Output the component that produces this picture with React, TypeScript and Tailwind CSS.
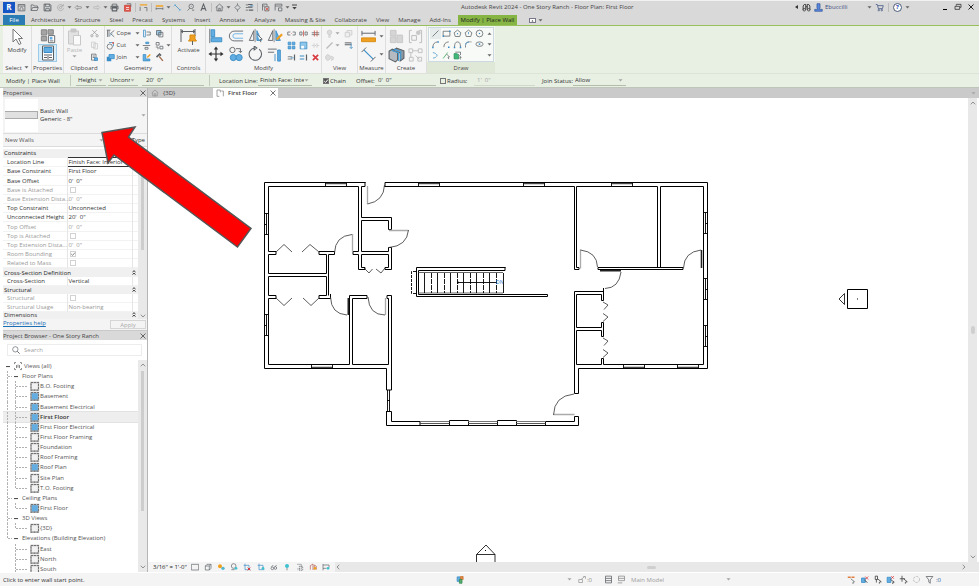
import type { ReactNode } from "react";

const INK = "#5c6166";
const BLUE = "#62aee2";
const DEEP = "#3a8cc6";
const ORANGE = "#f0a020";
const PALE = "#c8c8c8";

type GlyphProps = { size?: string; box?: string; children: ReactNode };

function Glyph({ size = "h-3 w-3", box = "0 0 12 12", children }: GlyphProps) {
  return (
    <svg className={`${size} shrink-0`} viewBox={box} fill="none" stroke={INK} strokeWidth="1" aria-hidden="true">
      {children}
    </svg>
  );
}

function Caret({ pale = false }: { pale?: boolean }) {
  return (
    <svg className="h-[3px] w-[5px] shrink-0" viewBox="0 0 5 3" aria-hidden="true">
      <path d="M0.5 0.3h4L2.5 2.6z" fill={pale ? "#a5a5a5" : "#666"} />
    </svg>
  );
}

function Chevron({ turn = "" }: { turn?: string }) {
  return (
    <svg className={`h-[4px] w-[6px] shrink-0 ${turn}`} viewBox="0 0 6 4" fill="none" stroke="#909090" aria-hidden="true">
      <path d="M0.8 0.7 3 3 5.2 0.7" />
    </svg>
  );
}

function Cross({ color = "#666" }: { color?: string }) {
  return (
    <svg className="h-[6px] w-[6px]" viewBox="0 0 6 6" stroke={color} fill="none" aria-hidden="true">
      <path d="M0.5 0.5 5.5 5.5M5.5 0.5 0.5 5.5" />
    </svg>
  );
}

function IconButton({ label, className = "", children }: { label: string; className?: string; children: ReactNode }) {
  return (
    <button type="button" aria-label={label} className={`flex shrink-0 items-center justify-center ${className}`}>
      {children}
    </button>
  );
}

function Check({ id, label, checked = false, pale = false }: { id: string; label?: string; checked?: boolean; pale?: boolean }) {
  return (
    <span className="relative inline-flex h-[6px] w-[6px] shrink-0">
      <input
        id={id}
        type="checkbox"
        aria-label={label}
        defaultChecked={checked}
        className={`h-[6px] w-[6px] appearance-none border ${pale ? "border-[#d2d2d2] bg-white" : "border-[#777] checked:bg-[#555]"}`}
      />
      {checked && (
        <svg className="pointer-events-none absolute inset-0 h-[6px] w-[6px]" viewBox="0 0 6 6" fill="none" stroke={pale ? "#888" : "#fff"} aria-hidden="true">
          <path d="M1.2 3 2.6 4.4 4.9 1.6" />
        </svg>
      )}
    </span>
  );
}

/* ---------- Quick access toolbar ---------- */

type Entry = { label: string; art: ReactNode };

const fileTools: Entry[] = [
  { label: "Home", art: <><path d="M1.5 2h9v8.5h-9zM1.5 4h9" /><path d="M4 10V7l2-1.5L8 7v3" /></> },
  { label: "Open", art: <path d="M1.5 10V2.500h3l1 1.500H10v2M1.500 10l2-4H11L9.500 10z" /> },
  { label: "Save", art: <><path d="M1.500 1.500H9L10.500 3v7.500h-9z" strokeWidth="1.300" /><path d="M3.500 1.500V5h5V1.500M3.500 10.500V7.500h5v3" /></> },
  { label: "Synchronize", art: <><path d="M9.500 4A4 4 0 1 0 10 7M9.700 1.500V4.200H7" stroke="#a5a5a5" /><circle cx="6" cy="6" r="1.500" stroke="#a5a5a5" /></> },
];
const undoTool: Entry = { label: "Undo", art: <path d="M4.500 3 1.500 6l3 3V7.200h3q2.500 0 3-1.200q-.5-1.200-3-1.200h-3z" stroke="#888" /> };
const redoTool: Entry = { label: "Redo", art: <path d="M7.500 3 10.500 6l-3 3V7.200h-3q-2.500 0-3-1.200q.5-1.200 3-1.200h3z" stroke="#b5b5b5" /> };
const outputTools: Entry[] = [
  { label: "Print", art: <><path d="M3 4V1.500h6V4M3 8H1.200V4.200h9.600V8H9" /><path d="M3 6.500h6v4H3zM1.500 5h9" strokeWidth="1.400" /></> },
  { label: "Export PDF", art: <><path d="M2 3h8v8H2z" fill="#e0574d" stroke="#c9453b" /><path d="M4 6h4M4 8.500h4" stroke="#fff" /><path d="M5 1h5.500v4" /></> },
];
const measureTool: Entry = { label: "Measure", art: <><path d="M1 2.500h10" stroke={ORANGE} strokeWidth="1.600" /><path d="M1.500 5v5.500M7 6h3.500v5" /></> };
const dimensionTool: Entry = { label: "Aligned dimension", art: <><path d="M1 4h10" stroke={ORANGE} strokeWidth="2" /><path d="M1.500 7.500h9M1.500 6v3M10.500 6v3" /></> };
const annotateTools: Entry[] = [
  { label: "Dimension", art: <><path d="M2.500 2.500 9.500 9.500" stroke={DEEP} /><path d="M1 4.500 3.500 1.500M8 11l3-3" stroke={BLUE} /></> },
  { label: "Tag", art: <><circle cx="7" cy="4.500" r="3" /><path d="M5 7 2 10M6.500 4.500h1M8 9.500h3" /></> },
  { label: "Text", art: <path d="M2.500 10.500 6 1.500l3.500 9M3.800 7.500h4.400" strokeWidth="1.400" /> },
];

function QuickTool({ item }: { item: Entry }) {
  return (
    <IconButton label={item.label} className="w-[13px]">
      <Glyph size="h-[9px] w-[9px]">{item.art}</Glyph>
    </IconButton>
  );
}

function Divider() {
  return <span className="mx-px h-[9px] w-px bg-[#bdbdbd]" />;
}

function QuickRow() {
  return (
    <>
      {fileTools.map((t) => <QuickTool key={t.label} item={t} />)}
      <IconButton label="Synchronize options" className="w-[5px]"><Caret /></IconButton>
      <QuickTool item={undoTool} />
      <IconButton label="Undo list" className="w-[5px]"><Caret /></IconButton>
      <QuickTool item={redoTool} />
      <IconButton label="Redo list" className="w-[5px]"><Caret /></IconButton>
      {outputTools.map((t) => <QuickTool key={t.label} item={t} />)}
      <Divider />
      <QuickTool item={measureTool} />
      <Divider />
      <QuickTool item={dimensionTool} />
      <IconButton label="Dimension options" className="w-[5px]"><Caret /></IconButton>
      {annotateTools.map((t) => <QuickTool key={t.label} item={t} />)}
      <Divider />
      <IconButton label="3D view" className="w-[13px]">
        <Glyph size="h-[9px] w-[9px]"><path d="M1 6 6 1.500 11 6M2.500 5v5.500h7V5M5 10.500V7h2v3.500" /></Glyph>
      </IconButton>
      <IconButton label="3D view options" className="w-[5px]"><Caret /></IconButton>
      <IconButton label="Section" className="w-[12px]">
        <Glyph size="h-[9px] w-[9px]"><path d="M6 2.500 9.500 6 6 9.500 2.500 6zM6 .5v2M6 9.500v2" /></Glyph>
      </IconButton>
      <IconButton label="Thin lines" className="w-[13px]">
        <Glyph size="h-[9px] w-[9px]"><path d="M1 2.500h3M1 6h3M1 9.500h3" /><path d="M4 2h6M4 5.500h6M5 9.500h6" strokeWidth="1.600" /><path d="M7 3.700h4" stroke={DEEP} /></Glyph>
      </IconButton>
      <Divider />
      <IconButton label="Close inactive views" className="w-[13px]">
        <Glyph size="h-[9px] w-[9px]"><path d="M2 10V1.500h6v3M2 4h3" /><path d="M5 5h5.500v5.500H5z" /><path d="m6 6 4 4M10 6l-4 4" stroke="#d84a40" /></Glyph>
      </IconButton>
      <IconButton label="Switch windows" className="w-[12px]">
        <Glyph size="h-[9px] w-[9px]"><path d="M1.500 10V1.500h9v3M1.500 4h9" /><path d="M6 6.500h4.500v4H6z" fill="#ddd" /></Glyph>
      </IconButton>
      <IconButton label="Window list" className="w-[6px]"><Caret /></IconButton>
      <IconButton label="Customize" className="w-[9px]">
        <svg className="h-[6px] w-[5px]" viewBox="0 0 5 6" aria-hidden="true"><path d="M0 .5h5v1H0zM0.300 3h4.400L2.500 5.500z" fill="#444" /></svg>
      </IconButton>
    </>
  );
}

function TitleBar() {
  return (
    <header className="relative flex h-[13px] shrink-0 items-center border-t border-[#f2f2f2] bg-[#d9d9d9] pl-[3px]">
      <IconButton label="Revit menu" className="h-[11px] w-[12px] bg-[#1656c4] text-[8px] leading-none font-bold text-white">R</IconButton>
      <QuickRow />
      <h1 className="absolute left-[461px] text-[6px] whitespace-nowrap text-[#444]">Autodesk Revit 2024 - One Story Ranch - Floor Plan: First Floor</h1>
      <div className="ml-auto flex items-center">
        <svg className="mr-[4px] h-[4px] w-[3px]" viewBox="0 0 3 4" aria-hidden="true"><path d="M3 0v4L0 2z" fill="#333" /></svg>
        <IconButton label="Search" className="mr-[3px]">
          <Glyph size="h-[9px] w-[9px]"><path d="M1.500 9V4l1.500-2h2v7M10.500 9V4L9 2H7v7M5 5h2" stroke="#333" strokeWidth="1.200" /><circle cx="3" cy="9" r="1.700" stroke="#333" /><circle cx="9" cy="9" r="1.700" stroke="#333" /></Glyph>
        </IconButton>
        <IconButton label="Account" className="mr-[2px]">
          <Glyph size="h-[9px] w-[9px]"><path d="M4 1h4v5.500L7 8.500h4v2.500H1V8.500h4L4 6.500z" fill="#5b8ae0" stroke="#34579c" /></Glyph>
        </IconButton>
        <button type="button" className="w-[42px] text-left text-[6px] text-[#3a4e80]">Ebuccilli</button>
        <Caret />
        <IconButton label="App store" className="ml-[3px]">
          <Glyph size="h-[9px] w-[9px]"><path d="M1 2h2l1.500 5.500H10L11 3.500H4" stroke="#3d5180" /><circle cx="5" cy="9.500" r="1" stroke="#3d5180" /><circle cx="9" cy="9.500" r="1" stroke="#3d5180" /></Glyph>
        </IconButton>
        <span className="mx-[4px] h-[9px] w-px bg-[#bbb]" />
        <IconButton label="Help" className="mr-[3px] h-[9px] w-[9px] rounded-full border border-[#4a5a7a] bg-white text-[6px] leading-none font-bold text-[#1c48a8]">?</IconButton>
        <Caret />
        <IconButton label="Minimize" className="ml-[32px] h-[8px] w-[5px]"><span className="mt-[4px] h-px w-[4px] bg-black" /></IconButton>
        <IconButton label="Restore" className="ml-[7px]">
          <Glyph size="h-[8px] w-[8px]"><path d="M3.500 4V2h7v4.500H9M1.500 5h7v4.500h-7z" stroke="#333" strokeWidth="1.200" /></Glyph>
        </IconButton>
        <IconButton label="Close" className="mr-[5px] ml-[6px]"><Cross color="#222" /></IconButton>
      </div>
    </header>
  );
}

const tabs = ["Architecture", "Structure", "Steel", "Precast", "Systems", "Insert", "Annotate", "Analyze", "Massing & Site", "Collaborate", "View", "Manage", "Add-Ins"];

function TabBar() {
  return (
    <nav className="flex h-[13px] shrink-0 items-stretch border-b border-[#97c05c] bg-[#d9d9d9] pt-[2px] pl-[3px] text-[6px] leading-[10px] text-[#444]">
      <button type="button" className="w-[22px] bg-[#2b7bb4] text-white">File</button>
      <div className="flex w-[431px] justify-between pr-[5px] pl-[6px]">
        {tabs.map((t) => (
          <button key={t} type="button" className="whitespace-nowrap">{t}</button>
        ))}
      </div>
      <button type="button" className="ml-[2px] w-[59px] bg-[#86b545] whitespace-nowrap text-[#222]">Modify | Place Wall</button>
      <IconButton label="Ribbon display" className="ml-[12px] gap-[2px]">
        <svg className="h-[5px] w-[7px]" viewBox="0 0 7 5" aria-hidden="true"><rect x=".5" y=".5" width="6" height="4" fill="#fff" stroke="#778" /><path d="M2.500 3.500h2L3.500 2z" fill="#333" /></svg>
        <Caret />
      </IconButton>
    </nav>
  );
}

/* ---------- Ribbon ---------- */

function Panel({ title, width, active = false, menu = false, children }: { title: string; width: string; active?: boolean; menu?: boolean; children: ReactNode }) {
  return (
    <section className={`flex shrink-0 flex-col ${width} ${active ? "bg-[#f4f7f0]" : "border-r border-[#dedede] bg-[#f5f5f5]"}`}>
      <div className="flex min-h-0 flex-1 justify-center pt-px">{children}</div>
      <h2 className={`flex h-[11px] items-center justify-center gap-[2px] text-[6px] leading-none text-[#444] ${active ? "bg-[#dfe8d7]" : ""}`}>
        {title}
        {menu && <Caret />}
      </h2>
    </section>
  );
}

function Tool({ label, art, cell = "h-[12px] w-[13px]", glyph = "h-[9px] w-[9px]", box }: { label: string; art: ReactNode; cell?: string; glyph?: string; box?: string }) {
  return (
    <IconButton label={label} className={cell}>
      <Glyph size={glyph} box={box}>{art}</Glyph>
    </IconButton>
  );
}

function Column({ children, className = "" }: { children: ReactNode; className?: string }) {
  return <div className={`flex flex-col ${className}`}>{children}</div>;
}

const geometryRows: { text: string; left: ReactNode; mid: ReactNode; end: ReactNode; caret?: boolean }[] = [
  {
    text: "Cope",
    left: <><path d="M2 1.500v9M4 1.500v9M1 1.500h5M11 2 6 6l5 4.500" /><path d="m5 9 3-3" stroke={DEEP} /></>,
    mid: <><path d="M2 1.500h2.500v9H2z" stroke={DEEP} /><path d="M6 4h5v4H6" /></>,
    end: <><path d="M2 2h6v6H2z" fill="#9ccae8" /><path d="M5 4.500h5.500v6H5z" /></>,
  },
  {
    text: "Cut",
    left: <><path d="M4 2h6v5" stroke={DEEP} /><circle cx="5" cy="7.500" r="3.500" /><circle cx="9.500" cy="2.500" r="1.200" fill="#e05040" stroke="none" /></>,
    mid: <><path d="M5 1.500h4v2H5z" fill={BLUE} stroke={DEEP} /><path d="M1 6h10M4 8.500h4V11H4z" /></>,
    end: <><path d="M1.500 2h4v3.500h-4zM6.500 7h4v3.500h-4z" /><path d="M1 8h3v3" /></>,
    caret: true,
  },
  {
    text: "Join",
    left: <><path d="M1 5h6v6H1z" fill={DEEP} stroke="none" /><path d="M4 2h7v5.500H4z" fill={BLUE} stroke={DEEP} /></>,
    mid: <><path d="M1.500 2v8.500h9V8H5V2z" fill={BLUE} stroke={DEEP} /><path d="m7 6 4-4" stroke={ORANGE} strokeWidth="1.800" /></>,
    end: <><path d="M2 5.500 6 1.500l2 2" strokeWidth="2.200" /><path d="m5.500 4.500 5 6" stroke="#a06a4a" strokeWidth="1.800" /></>,
  },
];

const modifySmall: Entry[] = [
  { label: "Split element", art: <><path d="M1 4h3.500M1 8h3.500M1 4v4M11 4H7.500M11 8H7.500M11 4v4" /><path d="M5.500 6h1" stroke="#e06a5a" /></> },
  { label: "Split with gap", art: <><path d="M1 4h3v4H1zM8 4h3v4H8z" /><path d="M6 2v8" stroke="#d05040" /></> },
  { label: "Unpin", art: <><path d="M1 5h10M1 7.500h10" /><path d="M4.500 2v8M8 2v8" stroke="#d05040" /></> },
  { label: "Array", art: <path d="M1.500 1.500h3.500V5H1.500zM7 1.500h3.500V5H7zM1.500 7h3.500v3.500H1.500zM7 7h3.500v3.500H7z" fill={BLUE} stroke={DEEP} /> },
  { label: "Scale", art: <><path d="M1.500 1.500h9v9h-9z" fill="#8cc4ea" stroke={DEEP} /><path d="M3 6.500h3.500v3.500H3z" fill="#fff" stroke="none" /></> },
  { label: "Pin", art: <><path d="M1 6h3M8 6h3M4 3v6M8 3v6" stroke={PALE} /><path d="m5 5 2 2M7 5 5 7" stroke={PALE} /></> },
  { label: "Trim single", art: <><path d="M1 8h6M1 5h6" /><path d="M10 2v8" strokeWidth="1.600" /><path d="M5 6.500h4" stroke={DEEP} /></> },
  { label: "Trim multiple", art: <><path d="M1 4h6M1 8h6" stroke={DEEP} strokeWidth="1.600" /><path d="M10 2v8" strokeWidth="1.600" /></> },
  { label: "Delete", art: <path d="m2.500 2.500 7 7M9.500 2.500l-7 7" stroke="#d83a40" strokeWidth="2.200" /> },
];

const modifyLarge: Entry[] = [
  { label: "Align", art: <><path d="M2 1v16" /><path d="M3.500 2h4v8h-4zM3.500 11h12v4.500h-12z" fill={BLUE} stroke={DEEP} /></> },
  { label: "Offset", art: <><path d="M17 3.500H7a5.500 5.500 0 0 0 0 11h10" /><path d="M17 6.500H8a2.500 2.500 0 0 0 0 5h9" stroke={BLUE} /></> },
  { label: "Mirror pick", art: <><path d="M8 1v15" stroke="#888" /><path d="M6.500 3v11h-5z" /><path d="M10 3v11h5z" fill={BLUE} stroke={DEEP} /><path d="m10 7 6 5.500-2.500.5 1 3" fill="#fff" /></> },
  { label: "Mirror draw", art: <><path d="M8 1v15" stroke="#888" /><path d="M6.500 3v11h-5z" /><path d="M10 3v11h5z" fill={BLUE} stroke={DEEP} /><path d="m11 13 6-6" stroke={ORANGE} strokeWidth="2.500" /></> },
  { label: "Move", art: <><path d="M9 3v12M3 9h12" strokeWidth="1.300" stroke="#333" /><path d="M9 .5 11.500 4h-5zM9 17.500 11.500 14h-5zM.5 9 4 6.500v5zM17.500 9 14 6.500v5z" fill="#333" stroke="none" /></> },
  { label: "Copy", art: <><circle cx="5" cy="4.500" r="3" /><path d="M9 3h5v4M12 5.500l2 2 2-2" /><circle cx="6" cy="13" r="3.500" fill={BLUE} stroke={DEEP} /><circle cx="12.500" cy="13" r="3.500" fill={BLUE} stroke={DEEP} /></> },
  { label: "Rotate", art: <path d="M12.500 3.500A7 7 0 1 1 7 2.200M7 0v4.500L10 2.200z" strokeWidth="1.200" /> },
  { label: "Trim to corner", art: <><path d="M1 3.500h10M1 7h7" /><path d="M9 17V9M12 17V4.500h3V17z" stroke={DEEP} fill={BLUE} /></> },
];

const drawTools: Entry[] = [
  { label: "Line", art: <path d="m2 10 8-8" /> },
  { label: "Rectangle", art: <><path d="M1.500 3h9v6.500h-9z" /><path d="M.8 8.500h2v2h-2zM9.500 2h2v2h-2z" fill={DEEP} stroke="none" /></> },
  { label: "Inscribed polygon", art: <><path d="m6 1.500 4.500 3.500L9 10H3L1.500 5z" /><path d="M5.200 5.500h1.600v1.600H5.200z" fill={DEEP} stroke="none" /></> },
  { label: "Circumscribed polygon", art: <><path d="m6 1.500 4.500 3.500L9 10H3L1.500 5z" /><path d="M6 4v3" stroke={DEEP} /></> },
  { label: "Circle", art: <><circle cx="6" cy="6" r="4.500" /><path d="M5.200 5.200h1.600v1.600H5.200z" fill={DEEP} stroke="none" /></> },
  { label: "Start-end-radius arc", art: <><path d="M2.500 9.500Q2.500 3 9 2.500" /><path d="M1.500 9h2v2h-2zM8.500 1.500h2v2h-2z" fill={DEEP} stroke="none" /></> },
  { label: "Center-ends arc", art: <><path d="M2.500 9.500Q2.500 3 9 2.500" /><path d="M8 8.500h2v2H8z" fill={DEEP} stroke="none" /></> },
  { label: "Tangent arc", art: <><path d="M2 9.500Q2 2.500 6 2.500T10 9.500" /><path d="M1 9h2v2H1zM9 9h2v2H9z" fill={DEEP} stroke="none" /></> },
  { label: "Fillet arc", art: <><path d="M2 10V7Q2 2.500 7 2.500h3" strokeDasharray="3 1" /><path d="M2 7Q2 2.500 7 2.500" stroke={DEEP} /></> },
  { label: "Ellipse", art: <><ellipse cx="6" cy="5.500" rx="4.800" ry="3" /><path d="M5 4.500h2v2H5z" fill={DEEP} stroke="none" /></> },
  { label: "Partial ellipse", art: <path d="M2.500 2Q9 4 8 6.500T2.500 9.500" stroke={DEEP} strokeDasharray="4 1" /> },
  { label: "Pick lines", art: <><path d="m1.500 10 6-8" stroke="#30a050" /><path d="m6 4 4 4-2 .3 1 2.500" fill="#fff" /></> },
  { label: "Pick faces", art: <><path d="M1.500 3.500h6v7h-6z" fill="#3fb878" stroke="#2a8f58" /><path d="M3 1.500h7v4M7 5l4 3.500-2 .3 1 2.500" fill="#fff" /></> },
];

function Ribbon() {
  return (
    <div className="flex h-[48px] shrink-0 border-b border-[#dde3d8] bg-[#e8efe3] pl-[3px] text-[6px] leading-none text-[#444]">
      <Panel title="Select" width="w-[29px]" menu>
        <button type="button" className="flex flex-col items-center">
          <Glyph size="h-[20px] w-[14px]" box="0 0 14 20"><path d="M3 2v13l3-3 3 5.500 2-1-2.500-5H12.500z" fill="#fff" stroke="#777" /></Glyph>
          <span>Modify</span>
        </button>
      </Panel>
      <Panel title="Properties" width="w-[32px]">
        <Column className="items-center">
          <Tool label="Type properties" cell="h-[17px] w-[19px]" glyph="h-[16px] w-[16px]" box="0 0 18 18" art={<><path d="M1.500 2h6v6h-6zM9 2h6v5H9zM1.500 9.500h6v5h-6z" fill="#a5a5a5" stroke="#808080" /><path d="M9.500 8.500h7v8h-7z" fill="#fff" /><path d="M11 10h3v3h-3z" fill={BLUE} stroke="none" /><path d="M11 14.500h4" /></>} />
          <IconButton label="Properties palette" className="h-[18px] w-[19px] border border-[#9ccbe8] bg-[#d9edf8]">
            <Glyph size="h-[16px] w-[16px]" box="0 0 16 16"><path d="M2.500 1h11v14h-11z" fill="#fff" /><path d="M4 2.500h8v5H4z" fill={BLUE} stroke={DEEP} /><path d="M4 10h3M9 10h3M4 12.500h3M9 12.500h3M8 9v5" /></Glyph>
          </IconButton>
        </Column>
      </Panel>
      <Panel title="Clipboard" width="w-[41px]">
        <button type="button" className="mr-[6px] flex flex-col items-center text-[#b5b5b5]">
          <Glyph size="h-[20px] w-[15px]" box="0 0 15 20"><path d="M1.500 4h10v13h-10z" fill="#e2e2e2" stroke={PALE} /><path d="M4 2h5v3H4z" fill={PALE} stroke={PALE} /><path d="M6.500 8.500h7V18h-7z" fill="#fafafa" stroke={PALE} /></Glyph>
          <span className="mb-[2px]">Paste</span>
          <Caret pale />
        </button>
        <Column>
          <Tool label="Cut to clipboard" art={<><path d="m3 1.500 6 6M9 1.500l-6 6" stroke="#999" /><circle cx="2.500" cy="9" r="1.500" stroke="#999" /><circle cx="9.500" cy="9" r="1.500" stroke="#999" /></>} />
          <Tool label="Copy to clipboard" art={<path d="M2 1.500h5v7H2zM5 3.500h5v7H5z" stroke={PALE} />} />
          <Tool label="Match type" art={<><path d="M2 1.500h6v8H2zM3.500 4h3M3.500 6h3" /><path d="M6 6.500h4V10H6z" fill={BLUE} stroke={DEEP} /></>} />
        </Column>
      </Panel>
      <Panel title="Geometry" width="w-[67px]">
        <Column>
          {geometryRows.map((r) => (
            <div key={r.text} className="flex h-[12px] items-center">
              <button type="button" className="flex items-center gap-[2px]">
                <Glyph size="h-[9px] w-[9px]">{r.left}</Glyph>
                <span className="w-[16px] text-left">{r.text}</span>
                <Caret />
              </button>
              <Tool label={`${r.text} tool`} art={r.mid} />
              <Tool label={`${r.text} option`} art={r.end} />
              <span className="w-[5px]">{r.caret && <Caret />}</span>
            </div>
          ))}
        </Column>
      </Panel>
      <Panel title="Controls" width="w-[34px]">
        <button type="button" className="flex flex-col items-center">
          <Glyph size="h-[20px] w-[18px]" box="0 0 18 20"><path d="M2 2v13M16 2v7M2 4.500h14M4 3 2 4.500 4 6M14 3l2 1.500L14 6" /><path d="M11 8h5v4l1.500 2h-8l1.500-2z" fill={ORANGE} stroke="#d98c10" /><path d="M13.500 14v4" /></Glyph>
          <span>Activate</span>
        </button>
      </Panel>
      <Panel title="Modify" width="w-[116px]">
        <div className="grid grid-cols-4">
          {modifyLarge.map((m) => (
            <Tool key={m.label} label={m.label} art={m.art} cell="h-[18px] w-[20px]" glyph="h-[16px] w-[16px]" box="0 0 18 18" />
          ))}
        </div>
        <div className="grid grid-cols-3 self-start">
          {modifySmall.map((m) => (
            <Tool key={m.label} label={m.label} art={m.art} cell="h-[12px] w-[12px]" />
          ))}
        </div>
      </Panel>
      <Panel title="View" width="w-[36px]">
        <Column>
          <div className="flex items-center"><Tool label="Hide" cell="h-[12px] w-[10px]" art={<><circle cx="6" cy="4.500" r="3" stroke={PALE} fill="#ddd" /><path d="M5 8.500h2V11H5z" stroke={PALE} /></>} /><Caret pale /></div>
          <div className="flex items-center"><Tool label="Override graphics" cell="h-[12px] w-[10px]" art={<path d="m2 10 3-3 5-5" stroke="#bbb" strokeWidth="1.800" />} /><Caret pale /></div>
          <Tool label="Displace" cell="h-[12px] w-[10px]" art={<path d="M3.500 2 7 4v4l-3.500 2L1 8V4zM8 4l3 1.500v3L8 10" fill="#ddd" stroke={PALE} />} />
        </Column>
        <Column className="ml-[2px]">
          <Tool label="Selection box" art={<path d="M1.500 4.500h6v6h-6zM4 4.500V2h6.500v6H7.500" stroke={PALE} fill="#eee" />} />
          <Tool label="Linework" art={<><path d="M1 2.500h9M1 5h9" strokeWidth="1.300" /><path d="M9.500 3v7M7.500 8l2 2 2-2" stroke={DEEP} /></>} />
        </Column>
      </Panel>
      <Panel title="Measure" width="w-[28px]">
        <Column>
          <div className="flex items-center gap-px"><Tool label="Measure distance" cell="h-[18px] w-[19px]" glyph="h-[15px] w-[15px]" box="0 0 16 16" art={<><path d="M1 2v5M15 2v5M1 4.500h14" /><path d="M.5 9.500h15v4H.5z" fill={ORANGE} stroke="#d98c10" /></>} /><Caret /></div>
          <div className="flex items-center gap-px"><Tool label="Aligned dimension tool" cell="h-[18px] w-[19px]" glyph="h-[15px] w-[15px]" box="0 0 16 16" art={<><path d="m3 3 10 10" stroke={DEEP} strokeWidth="1.200" /><path d="m.5 5.500 5-5M10.500 15.500l5-5" /></>} /><Caret /></div>
        </Column>
      </Panel>
      <Panel title="Create" width="w-[41px]">
        <div className="grid grid-cols-2">
          <Tool label="Create parts" cell="h-[18px] w-[19px]" glyph="h-[15px] w-[15px]" box="0 0 16 16" art={<path d="M1.500 1.500h6v6h-6zM1.500 8.500h6v6h-6zM8.500 6.500h6v8h-6z" fill="#d5d5d5" stroke={PALE} />} />
          <Tool label="Create assembly" cell="h-[18px] w-[19px]" glyph="h-[15px] w-[15px]" box="0 0 16 16" art={<><path d="M4 1.500H1.500v13H4M12 1.500h2.500v13H12" stroke="#bbb" /><circle cx="11" cy="4" r="2.500" fill={PALE} stroke="none" /><path d="M4 7h5v5H4z" stroke="#bbb" /></>} />
          <Tool label="Create similar" cell="h-[18px] w-[19px]" glyph="h-[17px] w-[17px]" box="0 0 16 16" art={<><path d="M1 5 4 3l5 2v8l-2 2-6-3z" fill="#b4bac0" /><path d="M5 4.500 8 2l7 2.500v7L11.500 14V6.500z" fill="#8f979d" /><path d="M3.500 4 10 6.500V14M5.500 2.800 12 5v8" stroke="#3f9fdd" /></>} />
          <Tool label="Create group" cell="h-[18px] w-[19px]" glyph="h-[15px] w-[15px]" box="0 0 16 16" art={<path d="M1 2h4v4H1zM11 2h4v4h-4zM5 4h6M3 6v5M1.500 11h4v4h-4zM8 9l4 4M10.500 11h4v4h-4z" stroke="#c0c0c0" />} />
        </div>
      </Panel>
      <Panel title="Draw" width="w-[68px]" active>
        <div className="flex h-[35px] w-[66px] border border-[#ccd8e2] bg-[#f8faf7]">
          <div className="grid flex-1 grid-cols-5 pl-px">
            {drawTools.map((d) => (
              <Tool key={d.label} label={d.label} art={d.art} cell={d.label === "Line" ? "h-[11px] w-[11px] bg-[#e6ebec]" : "h-[11px] w-[11px]"} />
            ))}
          </div>
          <Column className="w-[8px] items-center justify-around">
            <span className="flex rotate-180"><Caret /></span>
            <Caret />
            <Caret />
          </Column>
        </div>
      </Panel>
    </div>
  );
}

/* ---------- Options bar ---------- */

function Pick({ id, label, value, width }: { id: string; label: string; value: string; width: string }) {
  return (
    <span className={`flex h-[11px] items-center border-b border-[#b3bdab] pr-[3px] pl-[2px] ${width}`}>
      <select id={id} aria-label={label} className="h-[9px] min-w-0 flex-1 appearance-none bg-transparent text-[6px] leading-[9px]">
        <option>{value}</option>
      </select>
      <Caret pale />
    </span>
  );
}

function OptionsBar() {
  return (
    <div className="flex h-[14px] shrink-0 items-center border-b border-[#bfc5bb] bg-[#e8efe3] pl-[6px] text-[6px] leading-none whitespace-nowrap text-[#333]">
      <span className="w-[64px]">Modify | Place Wall</span>
      <span className="mr-[5px] h-[11px] w-px bg-[#c2cbbb]" />
      <Pick id="depth" label="Height or depth" value="Height" width="w-[30px]" />
      <span className="w-[2px]" />
      <Pick id="level" label="Top level" value="Unconnected" width="w-[30px]" />
      <input aria-label="Unconnected height" defaultValue={"20'\u00a0\u00a00\""} className="ml-[4px] h-[11px] w-[62px] border-b border-[#b3bdab] bg-transparent pl-[4px] text-[6px]" />
      <span className="mr-[9px] ml-[5px] h-[11px] w-px bg-[#c2cbbb]" />
      <label htmlFor="locline" className="w-[39px]">Location Line:</label>
      <Pick id="locline" label="Location Line" value="Finish Face: Interior" width="w-[54px]" />
      <span className="w-[11px]" />
      <Check id="chain" checked />
      <label htmlFor="chain" className="ml-px w-[26px]">Chain</label>
      <label htmlFor="offset" className="w-[19px]">Offset:</label>
      <input id="offset" defaultValue={"0'\u00a0\u00a00\""} className="h-[11px] w-[61px] border-b border-[#b3bdab] bg-transparent pl-[3px] text-[6px]" />
      <span className="w-[4px]" />
      <Check id="radius" />
      <label htmlFor="radius" className="ml-px w-[27px]">Radius:</label>
      <input aria-label="Radius value" disabled defaultValue={"1'\u00a0\u00a00\""} className="h-[11px] w-[61px] border-b border-[#d0d8ca] bg-transparent pl-[3px] text-[6px] text-[#a5a5a5]" />
      <label htmlFor="join" className="ml-[7px] w-[31px]">Join Status:</label>
      <Pick id="join" label="Join Status" value="Allow" width="w-[53px]" />
    </div>
  );
}

/* ---------- Properties palette ---------- */

type Row = { name: string; value?: string; kind?: "group" | "check" | "edit"; dim?: boolean; on?: boolean };

const ZERO = "0'\u00a0\u00a00\"";

const rows: Row[] = [
  { name: "Constraints", kind: "group" },
  { name: "Location Line", value: "Finish Face: Interior", kind: "edit" },
  { name: "Base Constraint", value: "First Floor" },
  { name: "Base Offset", value: ZERO },
  { name: "Base is Attached", kind: "check", dim: true },
  { name: "Base Extension Dista...", value: ZERO, dim: true },
  { name: "Top Constraint", value: "Unconnected" },
  { name: "Unconnected Height", value: "20'\u00a0\u00a00\"" },
  { name: "Top Offset", value: ZERO, dim: true },
  { name: "Top is Attached", kind: "check", dim: true },
  { name: "Top Extension Dista...", value: ZERO, dim: true },
  { name: "Room Bounding", kind: "check", dim: true, on: true },
  { name: "Related to Mass", kind: "check", dim: true },
  { name: "Cross-Section Definition", kind: "group" },
  { name: "Cross-Section", value: "Vertical" },
  { name: "Structural", kind: "group" },
  { name: "Structural", kind: "check", dim: true },
  { name: "Structural Usage", value: "Non-bearing", dim: true },
];

function Fold() {
  return (
    <svg className="h-[5px] w-[4px]" viewBox="0 0 4 5" fill="none" stroke="#333" aria-hidden="true">
      <path d="M.5 2 2 .7 3.500 2M.5 4.500 2 3.200l1.500 1.300" />
    </svg>
  );
}

function PaletteTitle({ text }: { text: string }) {
  return (
    <div className="flex h-[9px] shrink-0 items-center justify-between bg-[#d9d9d9] pr-px text-[6px] leading-none text-[#444]">
      <h2>{text}</h2>
      <IconButton label={`Close ${text}`}><Cross /></IconButton>
    </div>
  );
}

function Properties() {
  return (
    <section className="flex shrink-0 flex-col text-[6px] leading-none text-[#333]">
      <PaletteTitle text="Properties" />
      <button type="button" className="flex h-[36px] items-center bg-[#f4f4f4] pr-px pl-[2px] text-left">
        <span className="flex h-[33px] w-[33px] items-center bg-white">
          <span className="h-[8px] w-full border-y border-r border-[#aaa] bg-[#e0e0e0]" />
        </span>
        <span className="ml-[2px] flex-1 leading-[8px]">Basic Wall<br />Generic - 8"</span>
        <Caret pale />
      </button>
      <div className="flex h-[14px] items-center border-y border-[#dcdcdc] bg-[#f4f4f4] px-[2px]">
        <select aria-label="Selection filter" className="w-[94px] appearance-none bg-transparent text-[6px] text-[#555]"><option>New Walls</option></select>
        <Caret pale />
        <button type="button" className="ml-auto whitespace-nowrap">Edit Type</button>
      </div>
      <div className="mt-[2px] flex h-[170px]">
        <div className="flex min-w-0 flex-1 flex-col">
          <table className="h-[163px] w-full table-fixed border-collapse">
            <colgroup>
              <col className="w-[64px]" />
              <col />
              <col className="w-[6px]" />
            </colgroup>
            <tbody>
              {rows.map((r, i) =>
                r.kind === "group" ? (
                  <tr key={i} className="bg-[#f0f0f0]">
                    <th colSpan={2} scope="colgroup" className="p-0 pl-px text-left align-middle font-normal text-[#222]">{r.name}</th>
                    <td className="p-0"><Fold /></td>
                  </tr>
                ) : (
                  <tr key={i} className={`border-b border-[#f2f2f2] ${r.dim ? "text-[#999]" : "text-[#333]"}`}>
                    <th scope="row" className="border-r border-[#e6e6e6] p-0 pl-[4px] text-left align-middle font-normal whitespace-nowrap">{r.name}</th>
                    <td className={`p-0 pl-px align-middle whitespace-nowrap ${r.kind === "edit" ? "border border-[#333] bg-white" : "border-r border-r-[#e6e6e6]"}`}>
                      {r.kind === "check" ? <span className="flex pl-px"><Check id={`prop-${i}`} label={r.name} checked={r.on} pale /></span> : r.value}
                    </td>
                    <td className="p-0" />
                  </tr>
                ),
              )}
            </tbody>
          </table>
          <div className="flex h-[7px] items-start justify-between bg-[#f0f0f0] pr-[2px] pl-px">
            <span>Dimensions</span>
            <Fold />
          </div>
        </div>
        <div className="flex w-[9px] flex-col items-center justify-between bg-[#e9e9e9] pt-[3px] pb-px">
          <span className="h-[98px] w-[3px] bg-[#cdcdcd]" />
          <Chevron />
        </div>
      </div>
      <div className="flex h-[12px] items-center justify-between border-b border-[#c9c9c9] bg-[#f4f4f4]">
        <a href="#help" className="pb-[3px] text-[#1a6fb5] underline">Properties help</a>
        <button type="button" disabled className="mr-px h-[9px] w-[36px] border border-[#d5d5d5] text-[#aaa]">Apply</button>
      </div>
    </section>
  );
}

/* ---------- Project browser ---------- */

type TreeNode = { text: string; level: 0 | 1 | 2; filled?: boolean; selected?: boolean; last?: boolean; tail?: boolean };

const nodes: TreeNode[] = [
  { text: "Views (all)", level: 0 },
  { text: "Floor Plans", level: 1 },
  { text: "B.O. Footing", level: 2 },
  { text: "Basement", level: 2, filled: true },
  { text: "Basement Electrical", level: 2, filled: true },
  { text: "First Floor", level: 2, filled: true, selected: true },
  { text: "First Floor Electrical", level: 2, filled: true },
  { text: "First Floor Framing", level: 2 },
  { text: "Foundation", level: 2 },
  { text: "Roof Framing", level: 2 },
  { text: "Roof Plan", level: 2, filled: true },
  { text: "Site Plan", level: 2 },
  { text: "T.O. Footing", level: 2, last: true },
  { text: "Ceiling Plans", level: 1 },
  { text: "First Floor", level: 2, filled: true, last: true },
  { text: "3D Views", level: 1 },
  { text: "{3D}", level: 2, last: true },
  { text: "Elevations (Building Elevation)", level: 1, last: true },
  { text: "East", level: 2, tail: true },
  { text: "North", level: 2, tail: true },
  { text: "South", level: 2, tail: true },
];

function Branch({ node }: { node: TreeNode }) {
  const end = node.last ? 5 : 11;
  if (node.level === 0) {
    return (
      <svg className="h-full w-[21px] shrink-0" viewBox="0 0 21 10" fill="none" stroke="#888" aria-hidden="true">
        <path d="M3 5.500h4" stroke="#444" />
        <path d="M11.500 3v-1.500h1.500M18.500 3v-1.500H17M11.500 7v1.500h1.500M18.500 7v1.500H17M13.500 4v3M15 3.500v3M16.500 4v3" />
      </svg>
    );
  }
  if (node.level === 1) {
    return (
      <svg className="h-full w-[19px] shrink-0" viewBox="0 0 19 10" fill="none" stroke="#b0b0b0" preserveAspectRatio="none" aria-hidden="true">
        <path d={`M4.500 0V${end}M5 5.500h4`} strokeDasharray="2 1" />
        <path d="M11 5.500h4" stroke="#444" />
      </svg>
    );
  }
  return (
    <svg className="h-full w-[37px] shrink-0" viewBox="0 0 37 10" fill="none" stroke="#b0b0b0" preserveAspectRatio="none" aria-hidden="true">
      {!node.tail && <path d="M4.500 0v11" strokeDasharray="2 1" />}
      <path d={`M12.500 0V${end}M13 5.500h12`} strokeDasharray="2 1" />
      <path d="M28 1.500h7.500v7.500H28z" fill={node.filled ? "#62ade2" : "#f1f1f1"} stroke="#b4b4b4" strokeWidth="1.400" />
      <path d="M28 1.500h7.500v7.500H28z" stroke="#707070" strokeDasharray="2 1" />
    </svg>
  );
}

function Browser() {
  return (
    <section className="flex min-h-0 flex-1 flex-col overflow-hidden text-[6px] leading-none text-[#555]">
      <PaletteTitle text="Project Browser - One Story Ranch" />
      <div className="flex h-[20px] shrink-0 items-center pr-[5px] pl-[4px]">
        <label className="flex h-[12px] flex-1 items-center border border-[#ececec] pl-[4px]">
          <Glyph size="h-[8px] w-[8px]"><circle cx="5" cy="5" r="4" /><path d="m8 8 3.500 3.500" strokeWidth="1.400" /></Glyph>
          <input type="search" aria-label="Search project" placeholder="Search" className="ml-[4px] w-[80px] text-[6px] placeholder:text-[#a0a0a0]" />
        </label>
      </div>
      <div className="flex min-h-0 flex-1">
        <ul className="mt-px flex h-[213px] min-w-0 flex-1 shrink-0 flex-col">
          {nodes.map((n, i) => (
            <li key={i} className={`flex min-h-0 flex-1 items-center whitespace-nowrap ${n.selected ? "bg-[#eeeeee] font-semibold text-[#333] outline outline-[#e2e2e2]" : ""}`}>
              <Branch node={n} />
              {n.text}
            </li>
          ))}
        </ul>
        <div className="flex w-[9px] flex-col items-center bg-[#e9e9e9] py-[3px]">
          <Chevron turn="rotate-180" />
          <span className="mt-[4px] h-[140px] w-[3px] bg-[#cdcdcd]" />
          <span className="mt-auto flex"><Chevron /></span>
        </div>
      </div>
    </section>
  );
}

/* ---------- Floor plan drawing ---------- */

const walls = [
  // exterior shell and lower left rooms
  "M365 182.500H264.500V368.500H386.500V390H391.500V295.500H387V298.500H388.500V364.500H352.500V298.500H367V295.500H349.500V364.500H268.500V298.500H276V295.500H268.500V276.500H326.500V295.500H319V298.500H330.500V294.500",
  // exterior shell and right rooms
  "M385 186.500V182.500H707.500V368.500H578.500V393.500H574.500V291.500H603.500V300.500H601.500V294.500H576.500V327.500H601.500V322.500H603.500V336.500H601.500V330.500H576.500V364.500H601.500V358.500H603.500V364.500H703.500V186.500H660.500V267.500M603.500 291.500V288.500",
  // upper left rooms
  "M365 182.500V186.500H361.500V217.500H391.500V229.500H388.500V220.500H361.500V251.500H388.500V247.500H391.500V269.500H385V267.500H388.500V254.500H361.500V267.500H365V269.500H358.500V254.500H353V251.500H358.500V186.500H268.500V251.500H276V254.500H268.500V273.500H326.500V254.500H319V251.500H334.500V254.500H328.500V295",
  // living room
  "M385 186.500H574.500V269.500H579V267.500H576.500V186.500H657.500V267.500H598V269.500H683V267.500H660.500M657.500 267.500H660.500",
  // lower bump-out
  "M386.500 411.500H391.500V421.500H420V425.500M386.500 411.500V425.500H578.500V416.500H574.500V421.500H545.500V425.500M449.500 425.500V420.500H468.500V425.500M497.500 425.500V420.500H516.500V425.500",
  // stair enclosure
  "M505 267.500H416.500V296.500H547.500V294.500H418.500V270.500H505V267.500",
];

const topWindows = [325.5, 418.5, 523.5, 611.5];
const bottomWindows = [311.5, 623.5, 677.5];
const leftWindows = [213.5, 314.5];
const rightWindows = [212.5, 278.5, 325.5];
const frontWindows = [420, 468, 516];
const treads = [424, 431, 437, 444, 450, 457, 463, 470, 476, 483, 489, 496, 503];

function FloorPlan() {
  return (
    <svg className="h-[464px] w-[820px] shrink-0" viewBox="148 98 820 464" fill="none" stroke="#000" role="img" aria-label="First floor plan">
      <g strokeLinecap="square">
        {walls.map((d) => (
          <path key={d} d={d} />
        ))}
      </g>
      <g strokeWidth=".9">
        {topWindows.map((x) => (
          <path key={x} d={`M${x} 182.500v4M${x + 21} 182.500v4M${x} 183.700h21`} />
        ))}
        {bottomWindows.map((x) => (
          <path key={x} d={`M${x} 364.500v4M${x + 21} 364.500v4M${x} 367.300h21`} />
        ))}
        {leftWindows.map((y) => (
          <path key={y} d={`M264.500 ${y}h4M264.500 ${y + 21}h4M266.500 ${y}v21M264.500 ${y + 11}h2`} />
        ))}
        {rightWindows.map((y) => (
          <path key={y} d={`M703.500 ${y}h4M703.500 ${y + 21}h4M705.500 ${y}v21M705.500 ${y + 11}h2`} />
        ))}
        {frontWindows.map((x) => (
          <g key={x}>
            <path d={`M${x} 421.500h29.500`} stroke="#666" />
            <path d={`M${x} 423.500h29.500`} stroke="#444" />
          </g>
        ))}
        <path d="M387.500 390v21M389.500 390v21M387 400.500h3" />
      </g>
      <g stroke="#aaa">
        <path d="M367.500 186v18M389 230.500h19.500M352.500 234v18M385.500 298v17M580.500 249.500v19M553.500 414.500h21" strokeWidth="1.300" />
      </g>
      <g stroke="#222" strokeWidth="1.600">
        <path d="M348.300 298v17M701.500 250v18M600 270.800h21" />
      </g>
      <g stroke="#333" strokeWidth=".8">
        <path d="M367.500 204Q384 201 384.500 185M408.500 230Q407 246 389 247.500M352 234.500Q335 236 334.500 253M330.500 297Q331 314 347 315M368 297Q369 315 385 315M580.500 250Q597 252 597.500 267M701 250Q684 252 683.500 268M621 272Q619 288 605 288.500" />
        <path d="M553.500 415Q554 396 574 394" />
        <path d="M276 252 284 244.500 292 252M302 252l8-7.500L319 252M276 298l8 7.500 8-7.500M303 298l8 7.500 8-7.500M364 268l5 5 3.500-4M376 269l5 4 4-5" />
        <path d="m603 302 5 3-4 4.500M603 313.500l5 3.500-5 4.500M603 338l5 3-4 4.500M603 349.500l5 3.500-5 4.500" />
      </g>
      <g strokeWidth=".9">
        <path d="M418.500 272.500H503M418.500 293H503" stroke="#555" />
        <path d="M416 271.500h-4.500v22h4.500" strokeDasharray="3 1" />
        {treads.map((x, i) => (
          <path key={x} d={`M${x + 0.5} 273v20`} strokeDasharray={i % 2 ? "5 1" : undefined} />
        ))}
        <path d="M457.500 282.500H497" />
        <circle cx="458" cy="282.500" r="1" fill="#000" stroke="none" />
      </g>
      <text x="496" y="284" fontSize="5" fill="#2f7fd0" stroke="none">DN</text>
      <g>
        <path d="M847.500 289.500h20v19h-20z" />
        <path d="m844.500 293.500-5.500 5.500 5.500 5.500z" strokeWidth=".8" />
        <path d="M857 299h1" />
        <path d="M476.500 564v-9.500h18.500V564M476.500 554.500l9.500-9.500 9 9.500" strokeWidth=".8" />
        <path d="M485 550.500h1" />
      </g>
    </svg>
  );
}

/* ---------- View area ---------- */

const viewTools: Entry[] = [
  { label: "Detail level", art: <path d="M.5 2h11v8.500H.5z" /> },
  { label: "Visual style", art: <path d="M2 4.500h6v6H2zM2 4.500 4.500 2h6L8 4.500M10.500 2v6L8 10.500" /> },
  { label: "Sun path", art: <><circle cx="4.500" cy="5" r="3" fill={ORANGE} stroke="none" /><circle cx="9" cy="8" r="2.500" fill="#4fb8d0" stroke="none" /></> },
  { label: "Shadows", art: <><circle cx="5.500" cy="4.500" r="3.500" /><path d="M2 10h5" /><circle cx="9" cy="8" r="2" fill="#3fc1cf" stroke="none" /></> },
  { label: "Crop view", art: <><path d="M3 1v9h8M1 3.500h8V10" stroke={DEEP} /><path d="m7 7 4 4M11 7l-4 4" stroke="#d83030" strokeWidth="1.400" /></> },
  { label: "Crop region", art: <><path d="M3 1v9h8M1 3.500h8V10" stroke={DEEP} /><circle cx="9" cy="8" r="2" fill="#3fc1cf" stroke="none" /></> },
  { label: "Temporary hide", art: <path d="M1.500 8a2 2 0 1 0 4 0 2 2 0 1 0-4 0M6 7.500a2 2 0 1 0 4 0 2 2 0 1 0-4 0M2 6l3-3M7 6l3-3" /> },
  { label: "Reveal hidden", art: <><circle cx="6" cy="4.500" r="3" fill="#3fc1cf" stroke="none" /><path d="M6 7.500V11" /></> },
  { label: "View properties", art: <path d="M2 2h6v7H2M5 5h5v6H5z" strokeDasharray="2 1" /> },
  { label: "Analytical model", art: <><path d="M2 10V4l4-2.500v9M8 10V3l3 2v5" stroke="#b0564a" /><circle cx="9" cy="8" r="2" fill={ORANGE} stroke="none" /></> },
  { label: "Constraints", art: <><path d="M1.500 1.500V11M1.500 3h9v4M1.500 8h5" /><circle cx="9" cy="8" r="2" fill="#3fc1cf" stroke="none" /></> },
];

function ViewArea() {
  return (
    <main className="flex min-w-0 flex-1 flex-col border-l border-[#b5b5b5] bg-white text-[6px] leading-none">
      <div className="flex h-[10px] shrink-0 items-center bg-[#cacaca] pr-[3px] text-[#444]">
        <button type="button" className="flex w-[65px] items-center gap-[4px] pl-[3px]">
          <Glyph size="h-[8px] w-[8px]"><path d="M1 6 6 1.500 11 6M2.500 5v5.500h7V5M5 10.500V7h2v3.500" stroke="#909090" /></Glyph>
          {"{3D}"}
        </button>
        <div className="flex h-full w-[65px] items-center bg-white pr-[2px] pl-[3px]">
          <button type="button" className="flex flex-1 items-center gap-[4px] font-semibold whitespace-nowrap">
            <Glyph size="h-[8px] w-[8px]"><path d="M1.500 11V1.500h5V5M8 3h3v8M1.500 11H5" stroke="#777" /></Glyph>
            First Floor
          </button>
          <IconButton label="Close view"><Cross color="#777" /></IconButton>
        </div>
        <span className="ml-auto"><Caret pale /></span>
      </div>
      <div className="flex min-h-0 flex-1">
        <div className="min-w-0 flex-1 overflow-hidden"><FloorPlan /></div>
        <div className="mr-[2px] flex w-[9px] shrink-0 flex-col items-center justify-between bg-[#e8e8e8] py-[3px]">
          <Chevron turn="rotate-180" />
          <span className="h-[8px] w-[4px] rounded bg-[#cfcfcf]" />
          <Chevron />
        </div>
      </div>
      <div className="flex h-[10px] shrink-0 items-center bg-[#e8e8e8] pr-[2px]">
        <div className="flex h-full w-[187px] shrink-0 items-center justify-between bg-[#f4f4f4] pr-[2px] pl-[5px] text-[#222]">
          <span className="w-[35px] whitespace-nowrap">3/16" = 1'-0"</span>
          {viewTools.map((v) => (
            <Tool key={v.label} label={v.label} art={v.art} cell="h-[10px] w-[13px]" glyph="h-[8px] w-[8px]" />
          ))}
        </div>
        <Chevron turn="rotate-90" />
        <span className="flex flex-1 justify-center"><span className="h-[3px] w-[9px] rounded bg-[#cfcfcf]" /></span>
        <Chevron turn="-rotate-90" />
        <span className="w-[10px]" />
      </div>
    </main>
  );
}

/* ---------- Status bar ---------- */

const selectTools: Entry[] = [
  { label: "Select links", art: <><path d="M1 3h4M6 3h4" stroke="#e08040" strokeWidth="1.800" /><path d="m5 5 5 4-2 .5V12" /></> },
  { label: "Select underlay", art: <><path d="M2 4h5v6H2z" fill={BLUE} stroke={DEEP} /><path d="m7 2 4 4M11 2 7 6" stroke="#d83030" /><path d="m6 7 4 3" stroke="#333" /></> },
  { label: "Select pinned", art: <path d="M3 1.500h3V6H3zM4.500 6v4M6 5l5 4-2.500.5v2" stroke="#333" /> },
  { label: "Select by face", art: <><path d="M1.500 3h5v7h-5z" fill={BLUE} stroke={DEEP} /><path d="m7 1.500 3.500 3.500M10.500 1.500 7 5" stroke="#d83030" /><path d="m6 6 5 3.500-2 .5v2" stroke="#333" /></> },
  { label: "Drag on selection", art: <path d="M4 1v8M1 5h7M6 5l5 4-2.500.5v2" stroke="#333" /> },
  { label: "Background process", art: <circle cx="6" cy="6" r="4" stroke="#aaa" strokeDasharray="3 1.500" /> },
  { label: "Filter", art: <path d="M1.500 2h9L7 6.500V11L5 9.500v-3z" /> },
];

function StatusBar() {
  return (
    <footer className="flex h-[14px] shrink-0 items-center border-t border-white bg-[#f4f4f4] pr-[38px] pl-[3px] text-[6px] leading-none text-[#333]">
      <span className="w-[453px]">Click to enter wall start point.</span>
      <Glyph size="h-[9px] w-[9px]"><path d="M1.500 2.500h4v6h-4z" fill={BLUE} stroke={DEEP} /><path d="M6 2h3.500v4H6z" fill="#e08a40" stroke="#c87030" /><path d="M4.500 6H8v5H4.500z" fill="#58b070" stroke="#308a50" /></Glyph>
      <span className="ml-[102px] flex"><Caret pale /></span>
      <span className="ml-[6px] flex items-center text-[#888]"><Glyph size="h-[9px] w-[9px]"><path d="M1 10h5V6H1zM4 6l5-4M7 2h3v3" stroke="#999" /></Glyph>:0</span>
      <span className="ml-[12px] flex items-center gap-[4px] text-[#a0a0a0]">
        <Glyph size="h-[9px] w-[9px]"><path d="M2 1.500h8v9H2zM2 4.500h8M2 7.500h8" /></Glyph>
        <Glyph size="h-[9px] w-[9px]"><path d="M2 1.500h8v6H2zM2 4.500h8M1 10.500h6" stroke="#888" /></Glyph>
      </span>
      <select aria-label="Active design option" className="ml-[4px] w-[96px] appearance-none bg-transparent pl-px text-[6px] text-[#a0a0a0]"><option>Main Model</option></select>
      <Caret pale />
      <div className="ml-auto flex items-center">
        {selectTools.map((s) => (
          <Tool key={s.label} label={s.label} art={s.art} cell="h-[10px] w-[13px]" glyph="h-[9px] w-[9px]" />
        ))}
        <span className="text-[#2d5f9a]">:0</span>
      </div>
    </footer>
  );
}

function Callout() {
  return (
    <svg className="pointer-events-none absolute top-[124px] left-[99px] h-[126px] w-[156px]" viewBox="99 124 156 126" aria-hidden="true">
      <path d="M102 132.500 135 127 128.500 137 251 228.500 237.500 247 114 155 108 163z" fill="#fe0000" stroke="#555" strokeWidth="1.500" />
    </svg>
  );
}

export default function App() {
  return (
    <div className="relative flex h-screen flex-col overflow-hidden bg-white font-['Open_Sans','Noto_Sans',sans-serif]">
      <TitleBar />
      <TabBar />
      <Ribbon />
      <OptionsBar />
      <div className="flex min-h-0 flex-1">
        <aside className="flex w-[147px] shrink-0 flex-col pl-[3px]">
          <Properties />
          <Browser />
        </aside>
        <ViewArea />
      </div>
      <StatusBar />
      <Callout />
    </div>
  );
}
